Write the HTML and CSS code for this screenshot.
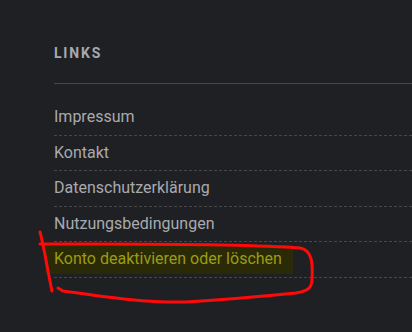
FILE: index.html
```html
<!DOCTYPE html>
<html lang="de">

<head>
    <meta charset="UTF-8">
    <meta name="viewport" content="width=device-width, initial-scale=1.0">
    <title>Links</title>
    <link rel="stylesheet" href="styles.css">
</head>

<body>
    <section class="footer-links">
        <h3 class="footer-title">Links</h3>
        <ul class="link-list">
            <li><a href="#">Impressum</a></li>
            <li><a href="#">Kontakt</a></li>
            <li><a href="#">Datenschutzerklärung</a></li>
            <li><a href="#">Nutzungsbedingungen</a></li>
            <li class="marked">
                <a href="#" class="highlight">Konto deaktivieren oder löschen</a>
                <!-- hand-drawn annotation -->
                <svg class="scribble" width="290" height="80" viewBox="0 0 290 80">
                    <path d="M4 4 C8 18 11 40 16 63" />
                    <path d="M4 16 C80 16 200 15 264 20 C276 22 277 35 276 51 C276 60 272 63 260 65 C230 68 200 71 150 74 C110 75 70 69 27 63 L22 60" />
                </svg>
            </li>
        </ul>
    </section>
</body>

</html>
```

FILE: styles.css
```css
html,
body {
    margin: 0;
    min-height: 100%;
    background-color: #1f2024;
}

body {
    font-family: Roboto, "Liberation Sans", sans-serif;
    min-height: 332px;
}

.footer-links {
    padding: 45px 0 60px 54px;
}

.footer-title {
    margin: 0;
    padding-bottom: 21px;
    border-bottom: 1px solid #46474b;
    font-size: 14px;
    line-height: 17px;
    font-weight: 700;
    letter-spacing: 1.8px;
    text-transform: uppercase;
    color: #a7a9ae;
}

.link-list {
    list-style: none;
    margin: 16px 0 0;
    padding: 0;
}

.link-list li {
    padding: 8px 0;
    line-height: 18.5px;
    border-bottom: 1px dashed #46474b;
}

.link-list a {
    font-size: 16px;
    color: #a9aaae;
    text-decoration: none;
}

.marked {
    position: relative;
}

.highlight {
    background-color: #2a2a06;
    padding: 4px 11px 6px 9px;
    margin-left: -9px;
    color: #9c9c14 !important;
}

.scribble {
    position: absolute;
    left: -18px;
    top: -14px;
    overflow: visible;
}

.scribble path {
    fill: none;
    stroke: #ff0a0a;
    stroke-width: 3;
    stroke-linecap: round;
}
```
